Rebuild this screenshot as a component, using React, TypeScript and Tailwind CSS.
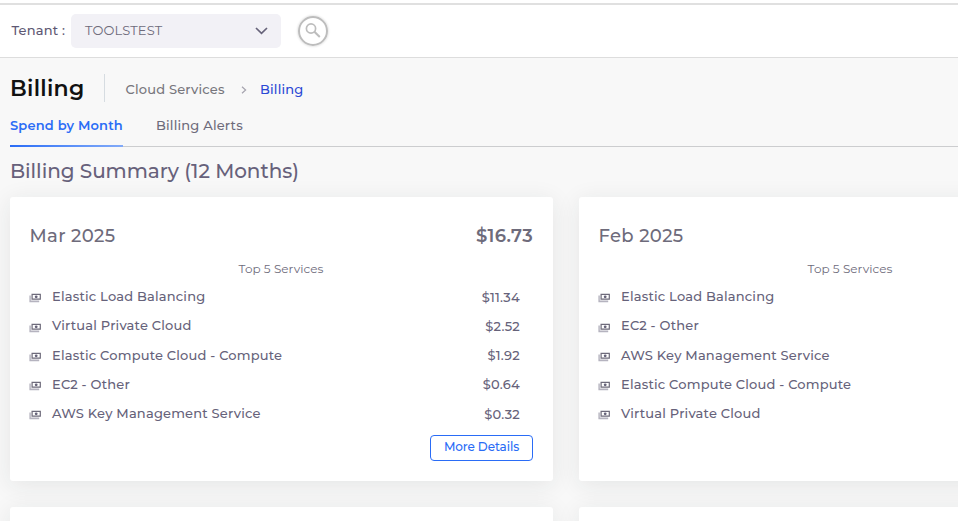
import React from "react";

type Service = { name: string; amount: string };
type Month = { title: string; total: string; services: Service[] };

const march: Month = {
  title: "Mar 2025",
  total: "$16.73",
  services: [
    { name: "Elastic Load Balancing", amount: "$11.34" },
    { name: "Virtual Private Cloud", amount: "$2.52" },
    { name: "Elastic Compute Cloud - Compute", amount: "$1.92" },
    { name: "EC2 - Other", amount: "$0.64" },
    { name: "AWS Key Management Service", amount: "$0.32" },
  ],
};

const february: Month = {
  title: "Feb 2025",
  total: "",
  services: [
    { name: "Elastic Load Balancing", amount: "" },
    { name: "EC2 - Other", amount: "" },
    { name: "AWS Key Management Service", amount: "" },
    { name: "Elastic Compute Cloud - Compute", amount: "" },
    { name: "Virtual Private Cloud", amount: "" },
  ],
};

function CashIcon() {
  return (
    <svg width="13" height="10" viewBox="0 0 13 10" className="shrink-0" fill="none">
      <path d="M.4 2.4h1.4v5.2h8.4v1.7H.4z" fill="#b5b3bf" />
      <path d="M3.1 1.4h8.2v4.8H3.1z" stroke="#6e6b7b" strokeWidth="1.2" />
      <circle cx="7.2" cy="3.8" r="1.4" fill="#67647a" />
    </svg>
  );
}

function MonthCard({ month }: { month: Month }) {
  return (
    <section className="h-[284px] w-[543px] shrink-0 rounded-[3px] bg-white pl-[19px] pr-5 pt-6 shadow-[0_4px_24px_rgba(34,41,47,0.09)]">
      <div className="flex h-[30px] items-center justify-between pl-[0.5px] text-[18px] text-[#6e6b7b]">
        <h3 className="font-medium tracking-[0.35px]">{month.title}</h3>
        <span className="font-semibold tracking-[0.35px]">{month.total}</span>
      </div>
      <div className="flex h-[35px] items-center justify-center text-[12px] text-[#6e6b7b]">
        <span className="tracking-[0.05px]">Top 5 Services</span>
      </div>
      <ul className="-mt-[3.7px] text-[13px] font-medium text-[#66627a]">
        {month.services.map((s) => (
          <li key={s.name} className="flex h-[29.2px] items-center pr-[13px]">
            <span className="pt-[3px]"><CashIcon /></span>
            <span className="ml-[10px] flex-1 tracking-[0.19px]">{s.name}</span>
            <span className="pt-[1.4px] tracking-[0.25px]">{s.amount}</span>
          </li>
        ))}
      </ul>
      {month.total && (
        <div className="mt-[6.7px] flex justify-end">
          <button className="flex h-[26px] w-[103px] items-center justify-center rounded-[4px] border border-[#2a6cf6] pb-0.5 text-[12px] font-medium tracking-[-0.1px] text-[#2a6cf6]">
            More Details
          </button>
        </div>
      )}
    </section>
  );
}

export default function App() {
  return (
    <div className="h-[521px] w-full overflow-hidden whitespace-nowrap bg-[#f8f8f8] font-['Montserrat',Inter,sans-serif]">
      <header className="h-[58px] border-b border-[#dddddd] bg-white pt-[3px]">
        <div className="h-[2px] bg-[#e0e0e0]" />
        <div className="flex items-center pl-[11px] pt-[9px]">
          <label className="w-[60px] pl-[0.5px] text-[13px] font-medium tracking-[0.19px] text-[#5e5873]">Tenant :</label>
          <div className="flex h-[34px] w-[210px] items-center justify-between rounded-[5px] bg-[#f2f1f6] pl-[14px] pr-[13px]">
            <span className="text-[13px] tracking-[0.14px] text-[#6e6b7b]">TOOLSTEST</span>
            <svg width="13" height="8" viewBox="0 0 13 8" fill="none" stroke="#67637a" strokeWidth="1.7">
              <path d="M1 1l5.5 5.4L12 1" />
            </svg>
          </div>
          <div className="ml-[17px] flex size-[30px] items-center justify-center rounded-full border-2 border-[#bdbdbd] shadow-[0_0_2px_1px_rgba(0,0,0,0.09)]">
            <svg width="16" height="16" viewBox="0 0 16 16" fill="none" stroke="#bdbdbd" strokeWidth="1.7">
              <circle cx="6" cy="5.5" r="4.6" />
              <path d="M9.4 8.8l5.4 5.2" strokeWidth="2.1" />
            </svg>
          </div>
        </div>
      </header>
      <main className="pl-[10px] pt-4">
        <div className="flex h-7 items-center">
          <h1 className="w-[94px] text-[22px] font-semibold tracking-[0.28px] text-[#111111]">Billing</h1>
          <nav className="flex h-7 items-center border-l border-[#d6dce1] pl-5 pt-[3px] text-[13px]">
            <span className="w-[100px] pl-[0.5px] font-medium tracking-[0.19px] text-[#77767c]">Cloud Services</span>
            <svg width="6" height="8" viewBox="0 0 6 8" fill="none" stroke="#a5a3ae" strokeWidth="1.2" className="ml-[16px]">
              <path d="M1 .8L4.6 4 1 7.2" />
            </svg>
            <span className="ml-[13px] font-medium tracking-[0.19px] text-[#2b48d5]">Billing</span>
          </nav>
        </div>
        <div className="flex h-[45px] border-b border-[#cccdcf] text-[13px]">
          <div className="relative flex w-[113px] pt-[14px] font-semibold text-[#2a6cf6]">
            <span className="tracking-[0.17px]">Spend by Month</span>
            <span className="absolute -bottom-px left-0 h-[2px] w-[113px] bg-linear-to-r from-[#2a6cf6] to-[#82aaf8]" />
          </div>
          <div className="ml-[33px] pt-[14px] font-medium tracking-[0.19px] text-[#6e6b7b]">Billing Alerts</div>
        </div>
        <h2 className="flex h-[50px] items-center pb-[3px] text-[20px] font-medium tracking-[-0.06px] text-[#67617b]">Billing Summary (12 Months)</h2>
        <div className="grid grid-cols-[543px_543px] gap-[26px]">
          <MonthCard month={march} />
          <MonthCard month={february} />
          <section className="h-[284px] rounded-[3px] bg-white shadow-[0_4px_24px_rgba(34,41,47,0.09)]" />
          <section className="h-[284px] rounded-[3px] bg-white shadow-[0_4px_24px_rgba(34,41,47,0.09)]" />
        </div>
      </main>
    </div>
  );
}
